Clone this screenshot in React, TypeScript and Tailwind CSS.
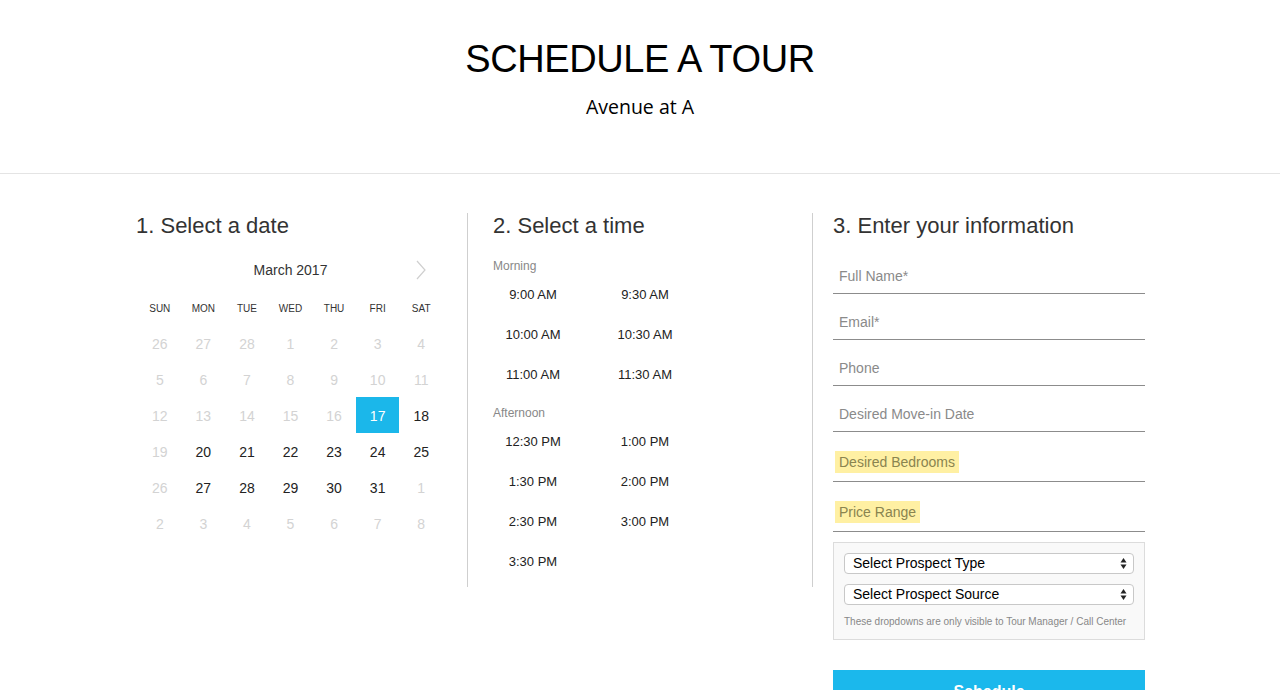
import React from 'react';

const sans = "font-['Liberation_Sans',Arial,sans-serif]";

type Day = { n: number; muted?: boolean; selected?: boolean };

const weeks: Day[][] = [
  [{ n: 26, muted: true }, { n: 27, muted: true }, { n: 28, muted: true }, { n: 1, muted: true }, { n: 2, muted: true }, { n: 3, muted: true }, { n: 4, muted: true }],
  [{ n: 5, muted: true }, { n: 6, muted: true }, { n: 7, muted: true }, { n: 8, muted: true }, { n: 9, muted: true }, { n: 10, muted: true }, { n: 11, muted: true }],
  [{ n: 12, muted: true }, { n: 13, muted: true }, { n: 14, muted: true }, { n: 15, muted: true }, { n: 16, muted: true }, { n: 17, selected: true }, { n: 18 }],
  [{ n: 19, muted: true }, { n: 20 }, { n: 21 }, { n: 22 }, { n: 23 }, { n: 24 }, { n: 25 }],
  [{ n: 26, muted: true }, { n: 27 }, { n: 28 }, { n: 29 }, { n: 30 }, { n: 31 }, { n: 1, muted: true }],
  [{ n: 2, muted: true }, { n: 3, muted: true }, { n: 4, muted: true }, { n: 5, muted: true }, { n: 6, muted: true }, { n: 7, muted: true }, { n: 8, muted: true }],
];

const dayNames = ['SUN', 'MON', 'TUE', 'WED', 'THU', 'FRI', 'SAT'];

const morning = ['9:00 AM', '9:30 AM', '10:00 AM', '10:30 AM', '11:00 AM', '11:30 AM'];
const afternoon = ['12:30 PM', '1:00 PM', '1:30 PM', '2:00 PM', '2:30 PM', '3:00 PM', '3:30 PM'];

const Calendar = () => (
  <div className="w-[305px] ml-[2px] mt-[20px]">
    <div className="grid grid-cols-7 h-6 items-center">
      <div />
      <div className="col-span-5 text-center text-[14px] text-[#333] pt-px">March 2017</div>
      <div className="flex justify-center">
        <svg width="10" height="20" viewBox="0 0 10 20" fill="none">
          <path d="M1 1 L9 10 L1 19" stroke="#cfcfcf" strokeWidth="1.2" />
        </svg>
      </div>
    </div>
    <div className="grid grid-cols-7 h-9 mt-[7px] items-center pt-[2px]">
      {dayNames.map((d) => (
        <div key={d} className="text-center text-[10px] text-[#333]">{d}</div>
      ))}
    </div>
    {weeks.map((w, i) => (
      <div key={i} className="grid grid-cols-7">
        {w.map((d, j) => (
          <div
            key={j}
            className={
              'h-9 pt-[2px] flex items-center justify-center text-[14px] ' +
              (d.selected ? 'bg-[#1bb7ea] text-white' : d.muted ? 'text-[#d3d3d3]' : 'text-[#222]')
            }
          >
            {d.n}
          </div>
        ))}
      </div>
    ))}
  </div>
);

const TimeGrid = ({ times }: { times: string[] }) => (
  <div className="grid grid-cols-[112px_112px] -ml-4">
    {times.map((t) => (
      <div key={t} className="h-10 pt-[2px] flex items-center justify-center text-[13px] text-[#222]">{t}</div>
    ))}
  </div>
);

const Field = ({ label }: { label: string }) => (
  <div className="h-9 mb-[10px] pt-[2px] border-b border-[#8c8c8c] flex items-center pl-[6px] text-[14px] text-[#8a8a8a]">
    {label}
  </div>
);

const HighlightField = ({ label }: { label: string }) => (
  <div className="h-10 mb-[10px] border-b border-[#8c8c8c] flex items-center pl-[2px]">
    <span className="bg-[#fff0a3] px-1 h-[22px] pt-px flex items-center text-[14px] text-[#8a8450]">{label}</span>
  </div>
);

const SelectBox = ({ label }: { label: string }) => (
  <div className="h-[21px] rounded-[4px] border border-[#c8c8c8] bg-white flex items-center justify-between pl-2 pr-[6px] text-[14px] text-black">
    <span>{label}</span>
    <svg width="7" height="13" viewBox="0 0 7 13">
      <path d="M3.5 1 L6.5 5.5 L0.5 5.5 Z" fill="#222" />
      <path d="M3.5 12 L6.5 7.5 L0.5 7.5 Z" fill="#222" />
    </svg>
  </div>
);

export default function App() {
  return (
    <div className={`min-h-[690px] bg-white ${sans}`}>
      <header className="h-[174px] border-b border-[#e4e4e4] pt-[34px] text-center">
        <h1 className="text-[38px] leading-[50px] tracking-[-0.4px] font-light text-black">SCHEDULE A TOUR</h1>
        <p className="mt-[9px] text-[19.5px] leading-[28px] text-black font-['Open_Sans',sans-serif]">Avenue at A</p>
      </header>

      <main className="w-[1040px] mx-auto mt-[39px] flex items-start">
        <section className="w-[348px] h-[374px] border-r border-[#cfcfcf] pl-4">
          <h2 className="text-[22px] leading-6 pt-px text-[#333]">1. Select a date</h2>
          <Calendar />
        </section>

        <section className="w-[345px] h-[374px] border-r border-[#cfcfcf] pl-[25px]">
          <h2 className="text-[22px] leading-6 pt-px text-[#333]">2. Select a time</h2>
          <div className="mt-[20px] h-4 flex items-center text-[12px] text-[#888]">Morning</div>
          <TimeGrid times={morning} />
          <div className="mt-[11px] h-4 flex items-center text-[12px] text-[#888]">Afternoon</div>
          <TimeGrid times={afternoon} />
        </section>

        <section className="pl-5 w-[333px]">
          <h2 className="text-[22px] leading-6 pt-px text-[#333]">3. Enter your information</h2>
          <div className="w-[312px] mt-[20px]">
            <Field label="Full Name*" />
            <Field label="Email*" />
            <Field label="Phone" />
            <Field label="Desired Move-in Date" />
            <HighlightField label="Desired Bedrooms" />
            <HighlightField label="Price Range" />
            <div className="border border-[#dcdcdc] bg-[#f9f9f9] px-[10px] pt-[10px] pb-[10px] flex flex-col gap-[10px]">
              <SelectBox label="Select Prospect Type" />
              <SelectBox label="Select Prospect Source" />
              <p className="text-[10px] leading-[14px] text-[#888]">
                These dropdowns are only visible to Tour Manager / Call Center
              </p>
            </div>
            <button className="mt-[30px] w-full h-11 bg-[#1bb8ec] text-white font-bold text-[16px]">
              Schedule
            </button>
          </div>
        </section>
      </main>
    </div>
  );
}
